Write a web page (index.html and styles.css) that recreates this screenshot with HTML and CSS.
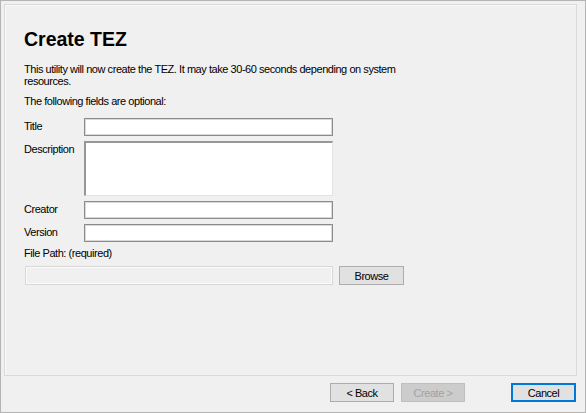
FILE: index.html
```html
<!DOCTYPE html>
<html lang="en">
<head>
    <meta charset="UTF-8">
    <title>Create TEZ</title>
    <link rel="stylesheet" href="styles.css">
</head>
<body>
    <div class="wizard">
        <div class="page">
            <h1 class="title">Create TEZ</h1>
            <p class="intro">This utility will now create the TEZ. It may take 30-60 seconds depending on system<br>resources.</p>
            <p class="optional">The following fields are optional:</p>

            <form class="fields">
                <label>Title</label>
                <input type="text" class="txt">
                <label>Description</label>
                <textarea class="desc"></textarea>
                <label>Creator</label>
                <input type="text" class="txt">
                <label>Version</label>
                <input type="text" class="txt">
            </form>

            <p class="pathLabel">File Path: (required)</p>
            <div class="pathRow">
                <input type="text" class="path" disabled>
                <button type="button" class="btn">Browse</button>
            </div>
        </div>

        <div class="footer">
            <button type="button" class="btn">&lt; Back</button>
            <button type="button" class="btn off" disabled>Create &gt;</button>
            <button type="button" class="btn cancel">Cancel</button>
        </div>
    </div>
</body>
</html>
```

FILE: styles.css
```css
*{
    margin: 0;
    padding: 0;
    box-sizing: border-box;
}

body{
    background: #f0f0f0;
    font-family: "Liberation Sans", Arial, sans-serif;
    font-size: 11px;
    line-height: 12px;
    letter-spacing: -0.45px;
    color: #000;
}

.wizard{
    width: 586px;
    height: 413px;
    border: 1px solid #b4b4b4;
    background: #f0f0f0;
    display: flex;
    flex-direction: column;
}

.page{
    margin: 3px 8px 0 3px;
    height: 372px;
    border: 1px solid #dadada;
    box-shadow: inset 1px 1px 0 #f9f9f9;
    padding: 23px 0 0 19px;
}

.title{
    font-size: 19.5px;
    line-height: 23px;
    font-weight: bold;
    letter-spacing: 0;
}

.intro{
    margin-top: 12px;
}

.optional{
    margin-top: 8px;
}

.fields{
    margin-top: 11px;
    display: grid;
    grid-template-columns: 60px 249px;
    row-gap: 5px;
}

.fields label{
    padding-top: 2px;
}

.txt{
    height: 18px;
    border: 1px solid #8c8c8c;
    box-shadow: inset 0 0 0 1px #d8d8d8;
    background: #fff;
    outline: none;
}

.desc{
    height: 55px;
    resize: none;
    background: #fff;
    border-style: solid;
    border-width: 2px 1px 1px 2px;
    border-color: #979797 #e3e3e3 #e3e3e3 #979797;
    outline: none;
}

.pathLabel{
    margin-top: 5px;
}

.pathRow{
    margin-top: 7px;
    margin-left: 1px;
    display: flex;
    gap: 6px;
}

.path{
    width: 308px;
    height: 19px;
    background: #f0f0f0;
    border: 1px solid #d7d7d7;
    box-shadow: inset 0 0 0 1px #fbfbfb;
}

.btn{
    width: 65px;
    height: 19px;
    background: #e1e1e1;
    border: 1px solid #adadad;
    font-family: "Liberation Sans", Arial, sans-serif;
    font-size: 11px;
    letter-spacing: -0.45px;
    color: #000;
}

.footer{
    display: flex;
    justify-content: flex-end;
    padding: 7px 9px 0 0;
}

.footer .btn{
    width: 64px;
    margin-left: 7px;
}

.footer .off{
    background: #cccccc;
    border-color: #bfbfbf;
    color: #a3a3a3;
}

.footer .cancel{
    width: 65px;
    margin-left: 46px;
    border: 2px solid #0078d7;
}
```
